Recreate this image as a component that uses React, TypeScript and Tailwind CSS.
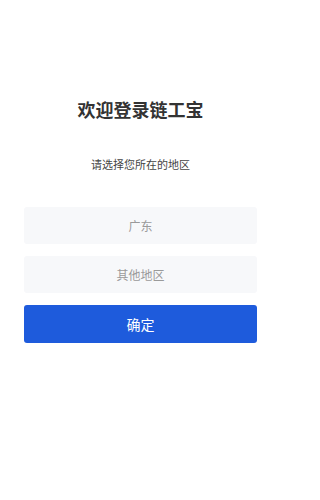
export default function App() {
  return (
    <div
      className="min-h-[500px] w-[281px] bg-white flex flex-col items-center"
      style={{ fontFamily: '"Noto Sans CJK SC", "Noto Sans", sans-serif' }}
    >
      <h1 className="mt-[96px] text-[18px] leading-[26px] font-bold text-[#333333]">
        欢迎登录链工宝
      </h1>
      <p className="mt-[34px] text-[11px] leading-[16px] text-[#444444]">
        请选择您所在的地区
      </p>
      <div className="mt-[35px] w-full px-[24px] flex flex-col gap-[12px]">
        <button className="h-[37px] w-full rounded-[3px] bg-[#f7f8fa] text-[12px] text-[#9a9a9a]">
          广东
        </button>
        <button className="h-[37px] w-full rounded-[3px] bg-[#f7f8fa] text-[12px] text-[#9a9a9a]">
          其他地区
        </button>
        <button className="h-[38px] w-full rounded-[3px] bg-[#1e5bdc] text-[14px] text-white">
          确定
        </button>
      </div>
    </div>
  );
}
